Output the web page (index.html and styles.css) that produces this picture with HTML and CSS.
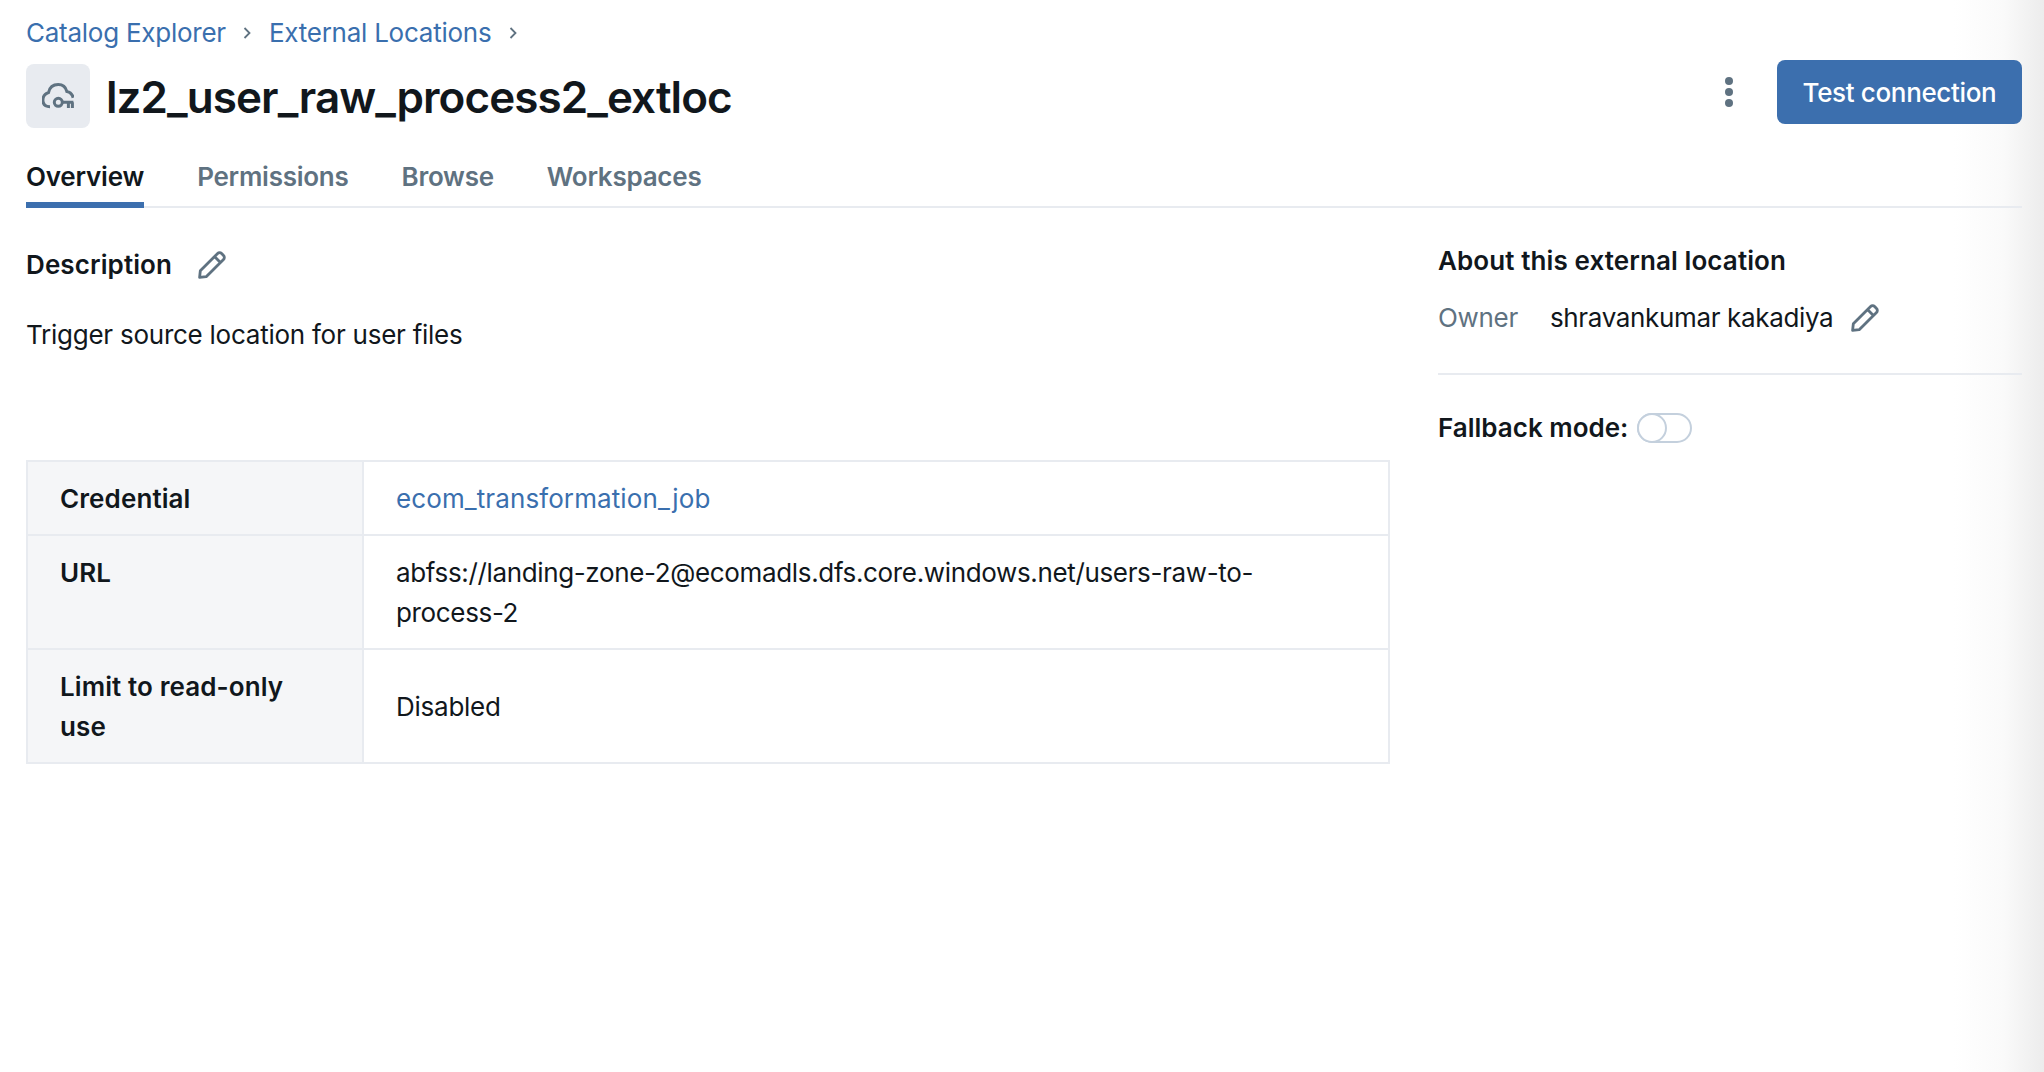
FILE: index.html
```html
<!DOCTYPE html>
<html lang="en">
<head>
  <meta charset="UTF-8" />
  <title>lz2_user_raw_process2_extloc</title>
  <link rel="stylesheet" href="styles.css">
</head>
<body>
  <nav class="crumbs">
    <a href="#">Catalog Explorer</a>
    <svg class="chevron" viewBox="0 0 10 14"><path d="M2.5 2l5 5-5 5" /></svg>
    <a href="#">External Locations</a>
    <svg class="chevron" viewBox="0 0 10 14"><path d="M2.5 2l5 5-5 5" /></svg>
  </nav>

  <header class="title-row">
    <div class="title-icon">
      <svg viewBox="0 0 32 26" width="32" height="26">
        <path class="line" d="M8 23.700C3 23.700.9 20.800.9 17.200c0-3.600 2.300-6.600 5.600-7.600C7.600 4.600 11.400 1.600 16.200 1.600c4.400 0 7.600 2.800 8.600 6.800 3.400.6 5.600 2.900 6.400 6.400" />
        <circle class="line" cx="16.300" cy="19.300" r="4" />
        <path class="line" d="M20.300 19.300H31.400M26.400 19.300V25M30.400 19.300V25" />
      </svg>
    </div>
    <h1>lz2_user_raw_process2_extloc</h1>
    <div class="title-actions">
      <div class="kebab"><span></span><span></span><span></span></div>
      <button class="btn" type="button">Test connection</button>
    </div>
  </header>

  <div class="tabs">
    <a class="tab active" href="#">Overview</a>
    <a class="tab" href="#">Permissions</a>
    <a class="tab" href="#">Browse</a>
    <a class="tab" href="#">Workspaces</a>
  </div>

  <main class="content">
    <section class="left">
      <div class="desc-head">
        <h2>Description</h2>
        <svg class="pencil" viewBox="0 0 28 28"><path d="M1.600 26.400l.7-6.600L19.600 2.500a2.800 2.800 0 0 1 4 0l1.900 1.900a2.800 2.800 0 0 1 0 4L8.200 25.700zM16.500 5.600l5.900 5.900" /></svg>
      </div>
      <p class="desc">Trigger source location for user files</p>

      <table class="info">
        <tr>
          <th>Credential</th>
          <td class="link-cell"><a href="#">ecom_transformation_job</a></td>
        </tr>
        <tr>
          <th>URL</th>
          <td class="url">abfss://landing-zone-2@ecomadls.dfs.core.windows.net/users-raw-to-process-2</td>
        </tr>
        <tr>
          <th>Limit to read-only use</th>
          <td>Disabled</td>
        </tr>
      </table>
    </section>

    <aside class="right">
      <h2>About this external location</h2>
      <div class="owner">
        <span class="owner-label">Owner</span>
        <span class="owner-name">shravankumar kakadiya</span>
        <svg class="pencil" viewBox="0 0 28 28"><path d="M1.600 26.400l.7-6.600L19.600 2.500a2.800 2.800 0 0 1 4 0l1.900 1.900a2.800 2.800 0 0 1 0 4L8.200 25.700zM16.500 5.600l5.900 5.900" /></svg>
      </div>
      <div class="fallback">
        <b>Fallback mode:</b>
        <span class="toggle"><span class="knob"></span></span>
      </div>
    </aside>
  </main>
</body>
</html>
```

FILE: styles.css
```css
html, body {
  height: 100%;
}
body {
  margin: 0;
  padding: 0 22px 0 26px;
  box-sizing: border-box;
  font-family: Inter, "Liberation Sans", sans-serif;
  font-size: 26px;
  line-height: 40px;
  letter-spacing: -0.25px;
  color: #11171c;
  background: linear-gradient(90deg, #fff calc(100% - 90px), #fafafa calc(100% - 40px), #ececec 100%);
}
a {
  color: #3a6fae;
  text-decoration: none;
}
h1, h2, p {
  margin: 0;
}
h2 {
  font-size: 26px;
  font-weight: 600;
  letter-spacing: 0.1px;
}
.crumbs {
  display: flex;
  align-items: center;
  height: 40px;
  padding-top: 13px;
}
.chevron {
  width: 10px;
  height: 14px;
  margin: 0 16.500px;
  fill: none;
  stroke: #5f7281;
  stroke-width: 1.800;
}
.title-row {
  display: flex;
  align-items: flex-start;
  margin-top: 11px;
}
.title-icon {
  display: flex;
  align-items: center;
  justify-content: center;
  width: 64px;
  height: 64px;
  border-radius: 8px;
  background: #e8ebf0;
}
.line {
  fill: none;
  stroke: #5f7281;
  stroke-width: 3;
}
h1 {
  margin-left: 16px;
  font-size: 44px;
  line-height: 66px;
  font-weight: 600;
  letter-spacing: -0.93px;
}
.title-actions {
  display: flex;
  align-items: center;
  margin-left: auto;
  margin-top: -4px;
}
.kebab {
  display: flex;
  flex-direction: column;
  gap: 3px;
  margin-right: 44px;
}
.kebab span {
  width: 8px;
  height: 8px;
  border-radius: 50%;
  background: #5f7281;
}
.btn {
  width: 245px;
  height: 64px;
  border: none;
  border-radius: 8px;
  background: #3c6fae;
  color: white;
  font: 500 26px Inter, "Liberation Sans", sans-serif;
  letter-spacing: -0.35px;
}
.tabs {
  display: flex;
  gap: 53px;
  margin-top: 27px;
  border-bottom: 2px solid #e8ebf0;
}
.tab {
  height: 41px;
  padding-bottom: 4px;
  color: #5f7281;
  font-weight: 600;
  letter-spacing: -0.25px;
}
.tab.active {
  margin-bottom: -2px;
  border-bottom: 6px solid #3c6fae;
  color: #11171c;
  letter-spacing: -0.2px;
}
.content {
  display: flex;
  gap: 48px;
}
.left {
  width: 1364px;
  padding-top: 37px;
}
.desc-head {
  display: flex;
  align-items: center;
  gap: 26px;
}
.pencil {
  width: 28px;
  height: 28px;
  fill: none;
  stroke: #5f7281;
  stroke-width: 2.800;
  stroke-linejoin: round;
}
.desc {
  margin-top: 30px;
  margin-bottom: 105px;
}
.info {
  width: 100%;
  border-collapse: collapse;
  table-layout: fixed;
}
.info th, .info td {
  padding: 17px 32px 15px;
  border: 2px solid #e8ebf0;
  text-align: left;
}
.info th {
  width: 270px;
  vertical-align: top;
  background: #f5f6f8;
  font-weight: 600;
  letter-spacing: 0.1px;
}
.info .link-cell {
  letter-spacing: 0.1px;
}
.info .url {
  padding-right: 120px;
  letter-spacing: -0.35px;
}
.right {
  flex: 1;
  padding-top: 33px;
}
.owner {
  display: flex;
  align-items: center;
  padding: 17px 0 35px;
  border-bottom: 2px solid #e8ebf0;
}
.owner-label {
  margin-right: 32px;
  color: #5f7281;
  letter-spacing: -0.3px;
}
.owner-name {
  letter-spacing: -0.35px;
}
.owner .pencil {
  margin-left: 18px;
}
.fallback {
  display: flex;
  align-items: center;
  gap: 9px;
  margin-top: 33px;
}
.fallback b {
  font-weight: 600;
  letter-spacing: 0;
}
.toggle {
  display: block;
  box-sizing: border-box;
  width: 55px;
  height: 30px;
  border: 2px solid #c4d0dd;
  border-radius: 15px;
}
.knob {
  display: block;
  box-sizing: border-box;
  width: 30px;
  height: 30px;
  margin: -2px;
  border: 2px solid #c4d0dd;
  border-radius: 50%;
  background: white;
}
```
